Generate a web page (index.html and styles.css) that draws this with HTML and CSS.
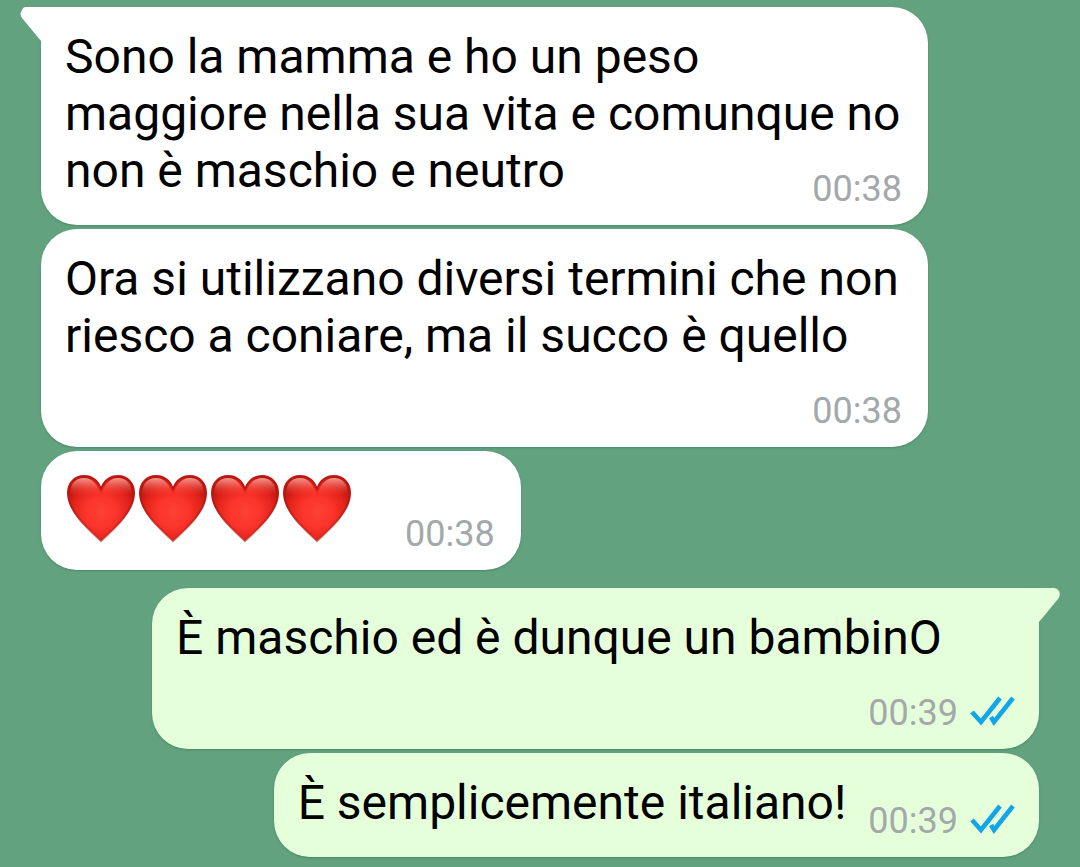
FILE: index.html
```html
<!DOCTYPE html>
<html lang="it">
<head>
<meta charset="utf-8">
<meta name="viewport" content="width=device-width, initial-scale=1">
<title>Chat</title>
<link rel="stylesheet" href="styles.css">
</head>
<body>
<svg class="defs" aria-hidden="true">
  <defs>
    <radialGradient id="heart-fill" gradientUnits="userSpaceOnUse" cx="36" cy="40" r="38">
      <stop offset="0" stop-color="#ff4034"/>
      <stop offset="0.4" stop-color="#fb352b"/>
      <stop offset="0.75" stop-color="#e3231b"/>
      <stop offset="1" stop-color="#bd140e"/>
    </radialGradient>
    <linearGradient id="heart-shine" x1="0" y1="0" x2="0" y2="1">
      <stop offset="0" stop-color="#ffb3a8" stop-opacity="0.85"/>
      <stop offset="1" stop-color="#ff5346" stop-opacity="0"/>
    </linearGradient>
    <linearGradient id="heart-edge" x1="0" y1="0" x2="0" y2="1">
      <stop offset="0" stop-color="#b81a13"/>
      <stop offset="0.4" stop-color="#b51812"/>
      <stop offset="1" stop-color="#c81c14" stop-opacity="0.6"/>
    </linearGradient>
    <symbol id="heart" viewBox="0 0 72 72">
      <path d="M36 69C27 60 3 41 3 21C3 11 10 4 19 4C27 4 33 9 36 17C39 9 45 4 53 4C62 4 69 11 69 21C69 41 45 60 36 69Z" fill="url(#heart-fill)" stroke="url(#heart-edge)" stroke-width="2"/>
      <path d="M5 23C5 11 11 6 19 6C27 6 32 12 34 19V23Z" fill="url(#heart-shine)"/>
      <path d="M67 23C67 11 61 6 53 6C45 6 40 12 38 19V23Z" fill="url(#heart-shine)"/>
    </symbol>
    <symbol id="ticks" viewBox="0 0 45 36">
      <path d="M2 17L11 27L30 3M21 22L24 27L43 3" fill="none" stroke="#12a5e8" stroke-width="4.6"/>
    </symbol>
  </defs>
</svg>
<main class="chat">
  <article class="bubble received first wide">
    <svg class="tail" viewBox="0 0 24 36" aria-hidden="true"><path d="M7 0H24V36L22 34L3 11Q0 7 3 3Q4 0 7 0Z"/></svg>
    <p class="text">Sono la mamma e ho un peso<br>maggiore nella sua vita e comunque no<br>non è maschio e neutro</p>
    <footer class="meta"><time>00:38</time></footer>
  </article>
  <article class="bubble received below wide">
    <p class="text">Ora si utilizzano diversi termini che non<br>riesco a coniare, ma il succo è quello</p>
    <footer class="meta"><time>00:38</time></footer>
  </article>
  <article class="bubble received short">
    <p class="hearts" role="img" aria-label="Quattro cuori rossi">
      <svg class="heart"><use href="#heart"/></svg><svg class="heart"><use href="#heart"/></svg><svg class="heart"><use href="#heart"/></svg><svg class="heart"><use href="#heart"/></svg>
    </p>
    <footer class="meta"><time>00:38</time></footer>
  </article>
  <article class="bubble sent first below wide">
    <svg class="tail" viewBox="0 0 24 36" aria-hidden="true"><path d="M17 0H0V36L2 34L21 11Q24 7 22 3Q20 0 17 0Z"/></svg>
    <p class="text">È maschio ed è dunque un bambinO</p>
    <footer class="meta"><time>00:39</time><svg class="ticks" role="img" aria-label="Letto"><use href="#ticks"/></svg></footer>
  </article>
  <article class="bubble sent short">
    <p class="text">È semplicemente italiano!</p>
    <footer class="meta"><time>00:39</time><svg class="ticks" role="img" aria-label="Letto"><use href="#ticks"/></svg></footer>
  </article>
</main>
</body>
</html>
```
FILE: styles.css
```css
* { box-sizing: border-box; }
body { margin: 0; background: #62a27f; color: #000; font-family: Roboto, "Liberation Sans", sans-serif; }
.defs { position: absolute; width: 0; height: 0; }
.chat { display: flex; flex-direction: column; gap: 4px; padding: 7px 41px 9px; }
.bubble { position: relative; display: flex; flex-direction: column; max-width: 100%; padding: 21px 26px 15px 24px; border-radius: 36px; box-shadow: 0 1px 2px #4b8766; }
.wide { width: 887px; }
.received { align-self: flex-start; background: #fff; }
.sent { align-self: flex-end; padding-right: 24px; background: #e6ffdb; }
.received.first { border-top-left-radius: 0; }
.sent.first { border-top-right-radius: 0; margin-top: 14px; }
.text { margin: 0; font-size: 48px; line-height: 57px; white-space: nowrap; }
.meta { display: flex; align-items: center; align-self: flex-end; gap: 12px; margin-top: -31px; color: #a3a8aa; font-size: 36px; line-height: 42px; }
.below .meta { margin-top: 26px; }
.tail { position: absolute; top: 0; width: 24px; height: 36px; }
.received .tail { right: calc(100% - 2px); fill: #fff; }
.sent .tail { left: calc(100% - 2px); fill: #e6ffdb; }
.short { flex-direction: row; align-items: flex-end; gap: 22px; }
.short .text, .short .hearts { margin-bottom: 11px; }
.short .meta { margin: 0; }
.hearts { display: flex; margin: 0; padding-right: 30px; }
.heart { width: 72px; height: 72px; }
.ticks { width: 45px; height: 36px; }
```
